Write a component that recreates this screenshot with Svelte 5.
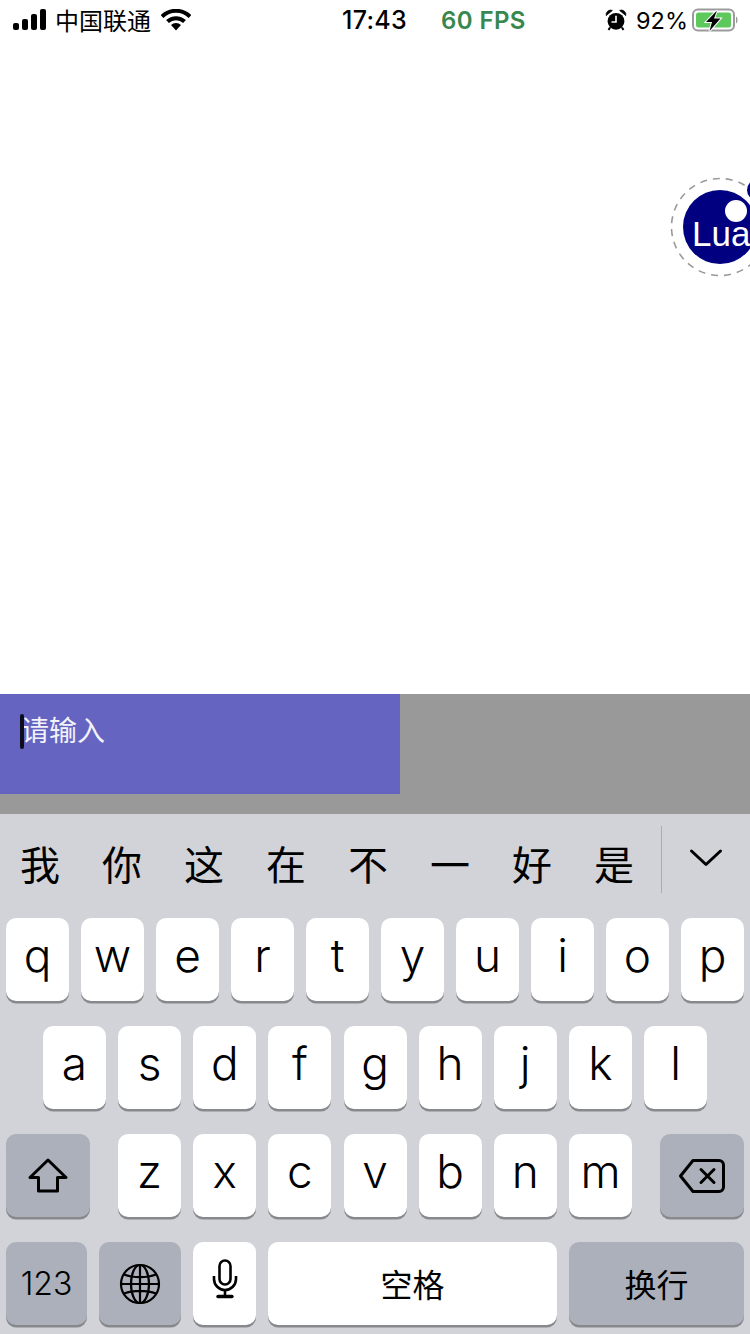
<script>
  const candidates = ['我', '你', '这', '在', '不', '一', '好', '是'];
  const row1 = ['q', 'w', 'e', 'r', 't', 'y', 'u', 'i', 'o', 'p'];
  const row2 = ['a', 's', 'd', 'f', 'g', 'h', 'j', 'k', 'l'];
  const row3 = ['z', 'x', 'c', 'v', 'b', 'n', 'm'];
</script>

<div class="page">
  <header class="status">
    <div class="left">
      <svg class="signal" width="34" height="22" viewBox="0 0 34 22">
        <rect x="0" y="14" width="6" height="7" rx="2" />
        <rect x="9" y="10" width="6" height="11" rx="2" />
        <rect x="18" y="5" width="6" height="16" rx="2" />
        <rect x="27" y="0" width="6" height="21" rx="2" />
      </svg>
      <span class="carrier">中国联通</span>
      <svg class="wifi" width="30" height="22" viewBox="0 0 30 22">
        <path d="M1 7.5 A20 20 0 0 1 29 7.5" fill="none" stroke="#000" stroke-width="4" />
        <path d="M6.5 12.5 A12.5 12.5 0 0 1 23.5 12.5" fill="none" stroke="#000" stroke-width="4" />
        <path d="M10 16 A7 7 0 0 1 20 16 L15 21.5 Z" fill="#000" />
      </svg>
    </div>
    <div class="time">17:43</div>
    <div class="fps">60 FPS</div>
    <div class="right">
      <svg class="alarm" width="22" height="22" viewBox="0 0 22 22">
        <circle cx="11" cy="12.3" r="8.4" fill="#000" />
        <path d="M1.2 6.6 A4.6 4.6 0 0 1 7.4 1.4 Z M20.8 6.6 A4.6 4.6 0 0 0 14.6 1.4 Z" fill="#000" stroke="#000" stroke-width="0.8" />
        <path d="M11 6.8 V13 H6.5" fill="none" stroke="#fff" stroke-width="1.6" />
        <path d="M5 18.5 L3.5 21 M17 18.5 L18.5 21" stroke="#000" stroke-width="2" />
      </svg>
      <span class="percent">92%</span>
      <svg class="battery" width="47" height="24" viewBox="0 0 47 24">
        <rect x="1" y="1.5" width="41" height="21" rx="5" fill="none" stroke="#9b9b9b" stroke-width="2" />
        <rect x="4" y="4.5" width="35" height="15" rx="2.5" fill="#5dc85c" />
        <path d="M44 8.5 C46 9.5 46 14.5 44 15.5 Z" fill="#9b9b9b" />
        <path d="M25 2.5 L14 14 H20 L17.5 23 L28.5 10.5 H22 Z" fill="#000" stroke="#fff" stroke-width="2" paint-order="stroke" />
      </svg>
    </div>
  </header>

  <main class="canvas">
    <div class="lua">
      <svg class="lua-orbit" width="98" height="98" viewBox="0 0 98 98">
        <circle cx="49" cy="49" r="48.5" fill="none" stroke="#9a9a9a" stroke-width="1.6" stroke-dasharray="7 6" />
      </svg>
      <div class="lua-planet">
        <span class="lua-text">Lua</span>
        <span class="lua-hole"></span>
      </div>
      <span class="lua-moon"></span>
    </div>
  </main>

  <section class="band">
    <div class="input">
      <span class="caret"></span>
      <span class="placeholder">请输入</span>
    </div>
  </section>

  <section class="keyboard">
    <div class="candidates">
      <div class="cand-list">
        {#each candidates as c}
          <span class="cand">{c}</span>
        {/each}
      </div>
      <div class="cand-more">
        <svg width="34" height="20" viewBox="0 0 34 20">
          <path d="M2.5 3 L17 16.5 L31.5 3" fill="none" stroke="#000" stroke-width="3" stroke-linecap="round" stroke-linejoin="round" />
        </svg>
      </div>
    </div>

    <div class="row">
      {#each row1 as k}
        <div class="key">{k}</div>
      {/each}
    </div>
    <div class="row home">
      {#each row2 as k}
        <div class="key">{k}</div>
      {/each}
    </div>
    <div class="row between">
      <div class="key fn wide">
        <svg width="40" height="36" viewBox="0 0 40 36">
          <path d="M20 2 L38 19.5 H29.5 V33 H10.5 V19.5 H2 Z" fill="none" stroke="#000" stroke-width="3" stroke-linejoin="round" />
        </svg>
      </div>
      <div class="group">
        {#each row3 as k}
          <div class="key">{k}</div>
        {/each}
      </div>
      <div class="key fn wide">
        <svg width="46" height="34" viewBox="0 0 46 34">
          <path d="M14 1.5 H40 A4.5 4.5 0 0 1 44.5 6 V28 A4.5 4.5 0 0 1 40 32.5 H14 L1.5 17 Z" fill="none" stroke="#000" stroke-width="3" stroke-linejoin="round" />
          <path d="M22 10.5 L35 23.5 M35 10.5 L22 23.5" stroke="#000" stroke-width="3" stroke-linecap="round" />
        </svg>
      </div>
    </div>
    <div class="row">
      <div class="key fn num">123</div>
      <div class="key fn globe">
        <svg width="42" height="42" viewBox="0 0 42 42" fill="none" stroke="#000" stroke-width="2.2">
          <circle cx="21" cy="21" r="19" />
          <ellipse cx="21" cy="21" rx="9" ry="19" />
          <path d="M21 2 V40 M2 21 H40 M5 11.5 C14 15 28 15 37 11.5 M5 30.5 C14 27 28 27 37 30.5" />
        </svg>
      </div>
      <div class="key">
        <svg width="26" height="40" viewBox="0 0 26 40" fill="none" stroke="#000" stroke-width="2.6">
          <rect x="7.5" y="1.5" width="11" height="24" rx="5.5" />
          <path d="M2 17 V20 A11 11 0 0 0 24 20 V17 M13 31 V37" />
          <path d="M6 37.5 H20" stroke-width="3.4" stroke-linecap="round" />
        </svg>
      </div>
      <div class="key space">空格</div>
      <div class="key fn enter">换行</div>
    </div>
  </section>
</div>

<style>
  :global(body) {
    margin: 0;
    background: #fff;
  }
  .page {
    width: 750px;
    height: 1334px;
    overflow: hidden;
    display: flex;
    flex-direction: column;
    font-family: Inter, "Noto Sans CJK SC", sans-serif;
    color: #000;
  }
  .status {
    height: 40px;
    flex: none;
    display: grid;
    grid-template-columns: 342px 99px 130px 1fr;
    align-items: center;
  }
  .left {
    display: flex;
    align-items: center;
    padding-left: 13px;
  }
  .signal {
    display: block;
    margin-right: 8px;
  }
  .carrier {
    font-family: "Noto Sans CJK SC", sans-serif;
    font-size: 24px;
    margin-right: 10px;
    margin-top: -2px;
  }
  .wifi {
    display: block;
  }
  .time {
    font-size: 25px;
    font-weight: 500;
    letter-spacing: 0.3px;
  }
  .fps {
    font-size: 24px;
    font-weight: 600;
    color: #37874f;
    letter-spacing: 0.4px;
  }
  .right {
    display: flex;
    align-items: center;
    justify-content: flex-end;
    padding-right: 11px;
    gap: 9px;
  }
  .percent {
    font-size: 23.5px;
  }
  .battery {
    margin-left: -5px;
  }

  .canvas {
    height: 654px;
    flex: none;
    position: relative;
    background: #fff;
  }
  .lua {
    position: absolute;
    left: 671px;
    top: 138px;
    width: 98px;
    height: 98px;
  }
  .lua-orbit {
    position: absolute;
    left: 0;
    top: 0;
    overflow: visible;
  }
  .lua-planet {
    position: absolute;
    left: 12px;
    top: 12px;
    width: 74px;
    height: 74px;
    border-radius: 50%;
    background: #000080;
  }
  .lua-text {
    position: absolute;
    left: 9px;
    top: 21px;
    font-family: "Liberation Sans", sans-serif;
    font-size: 35px;
    line-height: 45px;
    color: #fff;
  }
  .lua-hole {
    position: absolute;
    left: 42px;
    top: 10px;
    width: 22px;
    height: 22px;
    border-radius: 50%;
    background: #fff;
  }
  .lua-moon {
    position: absolute;
    left: 76px;
    top: 1px;
    width: 22px;
    height: 22px;
    border-radius: 50%;
    background: #000080;
  }

  .band {
    height: 120px;
    flex: none;
    background: #999;
  }
  .input {
    position: relative;
    width: 400px;
    height: 100px;
    box-sizing: border-box;
    padding: 14px 0 0 21px;
    background: #6565c1;
  }
  .placeholder {
    font-family: "Noto Sans CJK SC", sans-serif;
    font-size: 28px;
    line-height: 42px;
    color: #f2f2fb;
    display: block;
  }
  .caret {
    position: absolute;
    left: 20px;
    top: 20px;
    width: 4px;
    height: 35px;
    border-radius: 2px;
    background: #0d0d1e;
  }

  .keyboard {
    height: 520px;
    flex: none;
    background: #d1d3d9;
  }
  .candidates {
    height: 104px;
    display: flex;
    align-items: flex-start;
    padding-top: 12px;
    box-sizing: border-box;
  }
  .cand-list {
    display: flex;
    width: 662px;
    flex: none;
    height: 67px;
    align-items: center;
    box-sizing: border-box;
    border-right: 1px solid #a9acb3;
  }
  .cand {
    width: 82px;
    text-align: center;
    font-family: "Noto Sans CJK SC", sans-serif;
    font-size: 40px;
    line-height: 67px;
    margin: 7px 0 0;
    position: relative;
    left: -1px;
  }
  .cand-more {
    flex: 1;
    display: flex;
    justify-content: center;
    margin-top: 22px;
  }
  .row {
    display: flex;
    gap: 12px;
    padding: 0 6px;
    margin-bottom: 25px;
  }
  .home {
    padding-left: 43px;
    gap: 12.13px;
  }
  .between {
    justify-content: space-between;
  }
  .group {
    display: flex;
    gap: 12.17px;
  }
  .key {
    width: 63px;
    height: 83px;
    flex: none;
    display: flex;
    align-items: center;
    justify-content: center;
    background: #fff;
    border-radius: 10px;
    box-shadow: 0 2.5px 0 #88898d;
    font-size: 46px;
    font-weight: 350;
    line-height: 1;
    padding-bottom: 9px;
    box-sizing: border-box;
  }
  .fn {
    background: #abb0ba;
    padding-bottom: 0;
  }
  .wide {
    width: 84px;
  }
  .num {
    width: 81px;
    font-size: 32px;
    font-weight: 350;
  }
  .globe {
    width: 82px;
  }
  .space {
    width: 289px;
    padding-bottom: 2px;
    font-family: "Noto Sans CJK SC", sans-serif;
    font-size: 32px;
    font-weight: 400;
  }
  .enter {
    width: 175px;
    padding-bottom: 2px;
    font-family: "Noto Sans CJK SC", sans-serif;
    font-size: 32px;
    font-weight: 400;
  }
</style>
